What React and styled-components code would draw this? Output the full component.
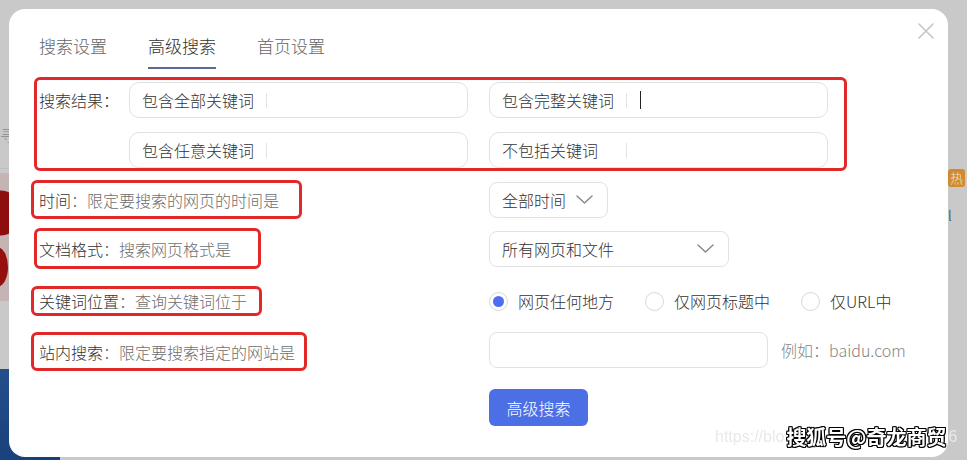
import React from 'react';
import styled, { createGlobalStyle } from 'styled-components';

const GlobalStyle = createGlobalStyle`
  html, body {
    margin: 0;
    padding: 0;
    background: #c9c9c9;
    overflow: hidden;
  }
  * { box-sizing: border-box; }
  body {
    font-family: "Noto Sans CJK SC", "Liberation Sans", sans-serif;
    font-weight: 300;
  }
`;

// page behind the dialog (already dimmed)
const Backdrop = styled.div`
  display: grid;
  grid-template-columns: 60px 1fr 19px;
  height: 460px;
  background: #c9c9c9;
`;

const LeftColumn = styled.div`
  display: flex;
  flex-direction: column;
  padding-top: 124px;
`;

const SideText = styled.div`
  font-size: 15px;
  color: #8a8a8a;
  line-height: 22px;
  border-bottom: 1px solid #bdbdbd;
  padding-bottom: 22px;
`;

const RedPicture = styled.div`
  height: 128px;
  margin-top: 4px;
  background: radial-gradient(circle at 0 40px, #8e0e0e 0 22px, #c4b4b4 23px 100%);
  position: relative;
  &::after {
    content: "";
    position: absolute;
    left: -14px;
    top: 74px;
    width: 22px;
    height: 40px;
    border-radius: 50%;
    background: #960f0f;
  }
`;

const BluePicture = styled.div`
  flex: 1;
  margin-top: 68px;
  background: linear-gradient(160deg, #244f8c, #173f78);
`;

const RightColumn = styled.div`
  display: flex;
  flex-direction: column;
  padding-top: 169px;
  gap: 20px;
`;

const HotBadge = styled.span`
  width: 17px;
  height: 18px;
  border-radius: 3px;
  background: #d08a30;
  color: #f6e6c8;
  font-size: 13px;
  line-height: 18px;
  text-align: center;
`;

const SideGlyph = styled.span`
  font-size: 14px;
  color: #333;
  line-height: 16px;
`;

// dialog
const Modal = styled.div`
  position: fixed;
  left: 9px;
  top: 9px;
  width: 939px;
  height: 448px;
  background: #fff;
  border-radius: 16px;
  padding: 25px 22px 0;
`;

const CloseButton = styled.button`
  position: absolute;
  right: 14px;
  top: 14px;
  width: 16px;
  height: 16px;
  padding: 0;
  border: none;
  background: none;
  display: flex;
`;

const Tabs = styled.div`
  display: flex;
  gap: 41px;
  padding-left: 8px;
`;

const Tab = styled.div`
  font-size: 17px;
  line-height: 24px;
  color: ${p => (p.$active ? '#333' : '#666')};
  padding-bottom: 9px;
  border-bottom: 2px solid ${p => (p.$active ? '#5c6a93' : 'transparent')};
`;

const RedFrame = styled.div`
  border: 3px solid #e3282a;
  border-radius: 6px;
`;

const KeywordSection = styled(RedFrame)`
  margin-top: 8px;
  margin-left: 3px;
  width: 813px;
  display: flex;
  align-items: flex-start;
  padding: 2px 16px 0 2px;
`;

const SectionLabel = styled.div`
  width: 90px;
  height: 36px;
  line-height: 36px;
  font-size: 16px;
  color: #333;
`;

const KeywordGrid = styled.div`
  display: grid;
  grid-template-columns: 339px 339px;
  gap: 14px 21px;
`;

const Field = styled.div`
  height: 36px;
  border: 1px solid #e2e2e2;
  border-radius: 10px;
  display: flex;
  align-items: center;
  padding-left: 12px;
  background: #fff;
`;

const Prefix = styled.span`
  width: 112px;
  font-size: 16px;
  color: #333;
  white-space: nowrap;
`;

const Divider = styled.span`
  width: 1px;
  height: 15px;
  margin-left: 12px;
  background: #e3e3e3;
`;

const Caret = styled.span`
  width: 1px;
  height: 18px;
  margin-left: 13px;
  background: #222;
`;

const PlainInput = styled.input`
  flex: 1;
  min-width: 0;
  border: none;
  outline: none;
  background: transparent;
  font: inherit;
  font-size: 16px;
  padding: 0 12px;
`;

const FormRow = styled.div`
  display: grid;
  grid-template-columns: 458px auto;
  align-items: ${p => p.$align || 'center'};
  height: ${p => p.$height}px;
  margin-top: ${p => p.$gap}px;
`;

const RowLabel = styled(RedFrame)`
  width: ${p => p.$width}px;
  height: ${p => p.$height}px;
  margin-left: ${p => p.$offset || 0}px;
  padding-left: ${p => 5 - (p.$offset || 0)}px;
  display: flex;
  align-items: center;
  font-size: 16px;
  white-space: nowrap;
`;

const LabelName = styled.span`
  color: #333;
`;

const LabelHint = styled.span`
  color: #6e6e6e;
`;

const Select = styled.div`
  width: ${p => p.$width}px;
  height: 36px;
  border: 1px solid #e2e2e2;
  border-radius: 8px;
  display: flex;
  align-items: center;
  justify-content: ${p => (p.$spread ? 'space-between' : 'flex-start')};
  gap: 10px;
  padding: 0 14px 0 12px;
  font-size: 16px;
  color: #333;
`;

const RadioGroup = styled.div`
  display: flex;
  align-items: center;
  gap: 31px;
`;

const RadioItem = styled.label`
  display: flex;
  align-items: center;
  gap: 10px;
  font-size: 16px;
  color: #333;
`;

const RadioCircle = styled.span`
  width: 19px;
  height: 19px;
  border-radius: 50%;
  border: 1px solid #d8d8d8;
  display: flex;
  align-items: center;
  justify-content: center;
  &::after {
    content: "";
    width: 11px;
    height: 11px;
    border-radius: 50%;
    background: ${p => (p.$checked ? '#4e6ef2' : 'transparent')};
  }
`;

const SiteGroup = styled.div`
  display: flex;
  align-items: center;
  gap: 13px;
`;

const SiteInput = styled.input`
  width: 279px;
  height: 36px;
  border: 1px solid #e2e2e2;
  border-radius: 8px;
  outline: none;
  padding: 0 12px;
  font: inherit;
`;

const Example = styled.span`
  font-size: 16px;
  color: #858585;
`;

const SubmitButton = styled.button`
  width: 99px;
  height: 37px;
  border: none;
  border-radius: 6px;
  background: #4d6fe6;
  color: #fff;
  font-family: inherit;
  font-weight: 300;
  font-size: 16px;
`;

// watermark layer on top of the screenshot
const Watermark = styled.div`
  position: fixed;
  left: 715px;
  top: 425px;
  display: flex;
  align-items: center;
  gap: 2px;
`;

const UrlMark = styled.span`
  font-family: "Liberation Sans", sans-serif;
  font-size: 16px;
  color: #e9e9e9;
  white-space: nowrap;
`;

const SohuMark = styled.span`
  font-size: 20px;
  font-weight: 700;
  line-height: 24px;
  color: #fff;
  white-space: nowrap;
  text-shadow: -1px -1px 0 #000, 1px -1px 0 #000, -1px 1px 0 #000, 1px 1px 0 #000, 0 1px 0 #000, 1px 0 0 #000, -1px 0 0 #000, 0 -1px 0 #000;
`;

const Chevron = ({ color = '#8a8a8a' }) => (
  <svg width="17" height="9" viewBox="0 0 17 9" fill="none">
    <polyline points="1,1 8.5,8 16,1" stroke={color} strokeWidth="1.5" strokeLinecap="round" strokeLinejoin="round" />
  </svg>
);

const CloseIcon = () => (
  <svg width="16" height="16" viewBox="0 0 16 16" fill="none">
    <path d="M1 1L15 15M15 1L1 15" stroke="#c6c6c6" strokeWidth="1.6" strokeLinecap="round" />
  </svg>
);

const keywordFields = [
  { prefix: '包含全部关键词' },
  { prefix: '包含完整关键词', caret: true },
  { prefix: '包含任意关键词' },
  { prefix: '不包括关键词' },
];

const positions = [
  { text: '网页任何地方', checked: true },
  { text: '仅网页标题中' },
  { text: '仅URL中' },
];

const App = () => {
  return (
    <>
      <GlobalStyle />
      <Backdrop>
        <LeftColumn>
          <SideText>寻</SideText>
          <RedPicture />
          <BluePicture />
        </LeftColumn>
        <div />
        <RightColumn>
          <HotBadge>热</HotBadge>
          <SideGlyph>l</SideGlyph>
        </RightColumn>
      </Backdrop>

      <Modal>
        <CloseButton aria-label="关闭"><CloseIcon /></CloseButton>
        <Tabs>
          <Tab>搜索设置</Tab>
          <Tab $active>高级搜索</Tab>
          <Tab>首页设置</Tab>
        </Tabs>

        <KeywordSection>
          <SectionLabel>搜索结果：</SectionLabel>
          <KeywordGrid>
            {keywordFields.map(f => (
              <Field key={f.prefix}>
                <Prefix>{f.prefix}</Prefix>
                <Divider />
                {f.caret && <Caret />}
                <PlainInput readOnly />
              </Field>
            ))}
          </KeywordGrid>
        </KeywordSection>

        <FormRow $height={39} $gap={9}>
          <RowLabel $width={271} $height={39}>
            <LabelName>时间</LabelName><LabelHint>：限定要搜索的网页的时间是</LabelHint>
          </RowLabel>
          <Select $width={119}>全部时间<Chevron /></Select>
        </FormRow>

        <FormRow $height={41} $gap={9}>
          <RowLabel $width={227} $height={41} $offset={3}>
            <LabelName>文档格式</LabelName><LabelHint>：搜索网页格式是</LabelHint>
          </RowLabel>
          <Select $width={240} $spread>所有网页和文件<Chevron /></Select>
        </FormRow>

        <FormRow $height={30} $gap={17}>
          <RowLabel $width={231} $height={30}>
            <LabelName>关键词位置</LabelName><LabelHint>：查询关键词位于</LabelHint>
          </RowLabel>
          <RadioGroup>
            {positions.map(p => (
              <RadioItem key={p.text}>
                <RadioCircle $checked={p.checked} />
                {p.text}
              </RadioItem>
            ))}
          </RadioGroup>
        </FormRow>

        <FormRow $height={39} $gap={16} $align="start">
          <RowLabel $width={276} $height={39}>
            <LabelName>站内搜索</LabelName><LabelHint>：限定要搜索指定的网站是</LabelHint>
          </RowLabel>
          <SiteGroup>
            <SiteInput />
            <Example>例如：baidu.com</Example>
          </SiteGroup>
        </FormRow>

        <FormRow $height={37} $gap={18}>
          <div />
          <div><SubmitButton>高级搜索</SubmitButton></div>
        </FormRow>
      </Modal>

      <Watermark>
        <UrlMark>https://blo</UrlMark>
        <SohuMark>搜狐号@奇龙商贸</SohuMark>
        <UrlMark>6</UrlMark>
      </Watermark>
    </>
  );
};

export default App;
